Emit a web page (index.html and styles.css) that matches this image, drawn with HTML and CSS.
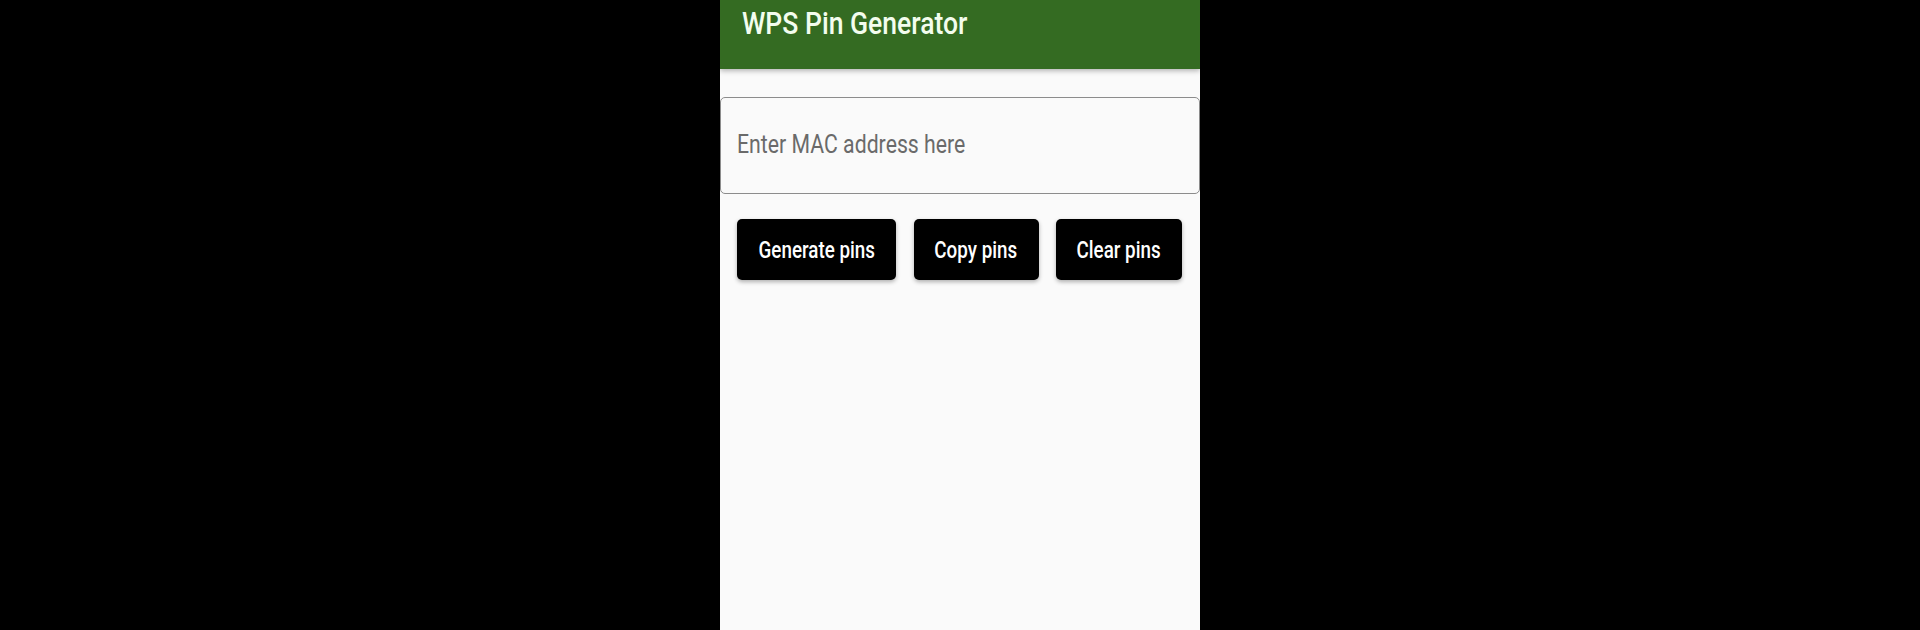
FILE: index.html
```html
<!DOCTYPE html>
<html lang="en">
<head>
<meta charset="utf-8">
<title>WPS Pin Generator</title>
<link rel="stylesheet" href="styles.css">
</head>
<body>
<div class="app">
  <header class="appbar">
    <h1 class="title"><span class="squeeze">WPS Pin Generator</span></h1>
  </header>
  <main class="content">
    <div class="field">
      <input class="field-input" type="text" aria-label="Enter MAC address here">
      <label class="field-label"><span class="squeeze">Enter MAC address here</span></label>
    </div>
    <div class="actions">
      <button class="btn"><span class="squeeze">Generate pins</span></button>
      <button class="btn"><span class="squeeze">Copy pins</span></button>
      <button class="btn"><span class="squeeze">Clear pins</span></button>
    </div>
  </main>
</div>
</body>
</html>
```

FILE: styles.css
```css
html, body {
  margin: 0;
  padding: 0;
  background: #000;
  height: 100%;
}
body {
  font-family: Roboto, "Noto Sans", sans-serif;
  overflow: hidden;
}
.app {
  width: 480px;
  height: 630px;
  margin: 0 auto;
  background: #fafafa;
  display: flex;
  flex-direction: column;
}
.appbar {
  height: 69px;
  box-sizing: border-box;
  padding: 9px 0 0 22px;
  background: #346b22;
  box-shadow: 0 2px 5px rgba(0, 0, 0, 0.28);
  position: relative;
  z-index: 1;
}
.title {
  margin: 0;
  font-size: 30.5px;
  line-height: 30px;
  font-weight: 500;
  color: #f3fdee;
  white-space: nowrap;
}
.squeeze {
  display: inline-block;
  white-space: nowrap;
}
.title .squeeze {
  transform: scaleX(0.87);
  transform-origin: left center;
}
.content {
  padding-top: 28px;
}
.field {
  position: relative;
  height: 97px;
}
.field-input {
  box-sizing: border-box;
  width: 100%;
  height: 100%;
  margin: 0;
  border: 1px solid #8c8c8c;
  border-radius: 5px;
  background: #fafafa;
  outline: none;
  font: inherit;
}
.field-label {
  position: absolute;
  top: 33px;
  left: 17px;
  font-size: 25px;
  line-height: 30px;
  color: #6a6a6a;
  pointer-events: none;
}
.field-label .squeeze {
  transform: scaleX(0.85);
  transform-origin: left center;
}
.actions {
  display: grid;
  grid-template-columns: 159px 125px 126px;
  column-gap: 17.5px;
  padding: 25px 0 0 17px;
}
.btn {
  height: 61px;
  padding: 0;
  border: none;
  border-radius: 5px;
  background: #000;
  color: #fff;
  font-family: Roboto, "Noto Sans", sans-serif;
  font-size: 23.5px;
  font-weight: 500;
  box-shadow: 0 2px 4px rgba(0, 0, 0, 0.3);
  display: flex;
  align-items: center;
  justify-content: center;
  overflow: visible;
}
.btn .squeeze {
  transform: scaleX(0.8);
  transform-origin: center center;
}
```
